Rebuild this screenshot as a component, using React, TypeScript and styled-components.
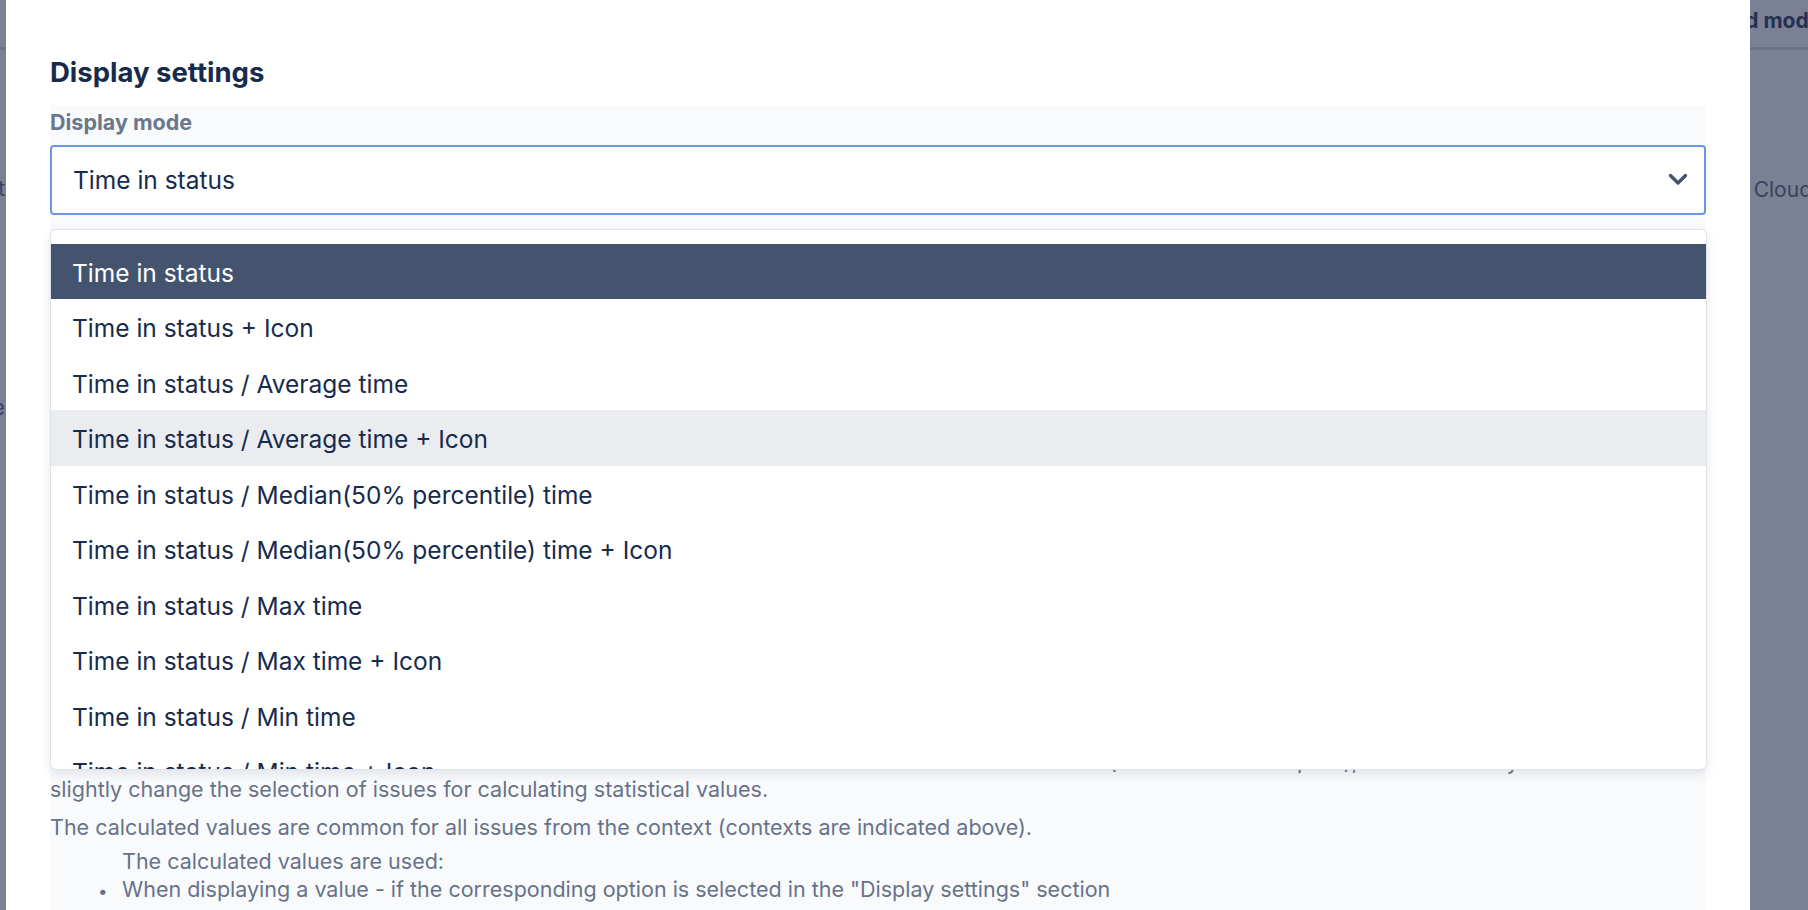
import styled, { createGlobalStyle } from 'styled-components'

const GlobalStyle = createGlobalStyle`
  html, body {
    margin: 0;
    padding: 0;
    height: 100%;
    overflow: hidden;
  }
  body {
    font-family: Inter, "Noto Sans", "Liberation Sans", sans-serif;
    background: #ffffff;
    color: #172b4d;
  }
  * {
    box-sizing: border-box;
  }
`

// page behind the modal
const BackPage = styled.div`
  height: 100vh;
  display: flex;
  flex-direction: column;
  background: #ffffff;
`

const BackHeader = styled.div`
  height: 50px;
  padding: 7px 0 0 1654px;
  border-bottom: 3px solid #dfe1e6;
  white-space: nowrap;
  overflow: hidden;
`

const BackTab = styled.span`
  font-size: 21px;
  line-height: 28px;
  font-weight: 700;
  color: #42526e;
`

const BackBody = styled.div`
  flex: 1;
  display: flex;
  justify-content: space-between;
  font-size: 21px;
  line-height: 28px;
  color: #6b778c;
  white-space: nowrap;
`

const LeftPeek = styled.div`
  width: 5px;
  overflow: hidden;
  direction: rtl;
  padding-top: 125px;
  display: flex;
  flex-direction: column;
  gap: 191px;
`

const RightPeek = styled.div`
  padding-top: 126px;
  margin-right: -4px;
`

const Overlay = styled.div`
  position: fixed;
  inset: 0;
  background: rgba(11, 22, 57, 0.54);
`

const Modal = styled.div`
  position: fixed;
  top: 0;
  bottom: 0;
  left: 6px;
  width: 1744px;
  background: #ffffff;
  padding: 56px 44px 0;
  overflow: hidden;
`

const Title = styled.h2`
  margin: 0;
  font-size: 27.5px;
  line-height: 33.6px;
  font-weight: 700;
  color: #172b4d;
`

const Panel = styled.div`
  margin-top: 15px;
  padding-top: 5px;
  background: #f9fafc;
  min-height: 900px;
`

const Label = styled.div`
  font-size: 21.5px;
  line-height: 25px;
  font-weight: 700;
  color: #6b778c;
  margin-bottom: 10px;
`

const SelectWrap = styled.div`
  position: relative;
`

const SelectBox = styled.div`
  height: 70px;
  border: 2px solid #6897e4;
  border-radius: 4px;
  background: #ffffff;
  display: flex;
  align-items: center;
  justify-content: space-between;
  padding: 0 16px 0 21px;
  font-size: 24.5px;
  color: #172b4d;
`

const Menu = styled.div`
  position: absolute;
  top: calc(100% + 14px);
  left: 0;
  right: -1px;
  height: 541px;
  padding-top: 14px;
  background: #ffffff;
  border: 1px solid rgba(9, 30, 66, 0.13);
  border-radius: 6px;
  box-shadow: 0 4px 11px rgba(9, 30, 66, 0.1);
  overflow: hidden;
  z-index: 2;
`

const Option = styled.div<{ $selected?: boolean; $hovered?: boolean }>`
  height: 55.5px;
  padding: 4px 21px 0;
  line-height: 51.5px;
  font-size: 24.5px;
  white-space: nowrap;
  color: ${p => (p.$selected ? '#ffffff' : '#172b4d')};
  background: ${p => (p.$selected ? '#44546f' : p.$hovered ? '#ebecf0' : 'transparent')};
`

const Description = styled.div`
  margin-top: 532px;
  font-size: 21.5px;
  line-height: 28px;
  color: #67728a;
`

const Para = styled.p<{ $gap?: number; $indent?: number }>`
  margin: ${p => p.$gap || 0}px 0 0;
  padding-left: ${p => p.$indent || 0}px;
  white-space: nowrap;
`

const List = styled.ul`
  margin: 0;
  padding-left: 72px;
  list-style: none;
`

const Item = styled.li`
  white-space: nowrap;
  &::before {
    content: '•';
    display: inline-block;
    width: 24px;
    margin-left: -24px;
    font-size: 17px;
    line-height: 1;
  }
`

const options = [
  'Time in status',
  'Time in status + Icon',
  'Time in status / Average time',
  'Time in status / Average time + Icon',
  'Time in status / Median(50% percentile) time',
  'Time in status / Median(50% percentile) time + Icon',
  'Time in status / Max time',
  'Time in status / Max time + Icon',
  'Time in status / Min time',
  'Time in status / Min time + Icon',
  'Time in status / Count',
  'Time in status / Count + Icon'
]

function Chevron () {
  return (
    <svg width='20' height='13' viewBox='0 0 20 13'>
      <polyline
        points='2.5,2.5 10,10 17.5,2.5'
        fill='none'
        stroke='#44546f'
        strokeWidth='3.4'
        strokeLinecap='round'
        strokeLinejoin='round'
      />
    </svg>
  )
}

export default function App () {
  const selected = 0
  const hovered = 3

  return (
    <>
      <GlobalStyle />
      <BackPage>
        <BackHeader>
          <BackTab>Advanced mode</BackTab>
        </BackHeader>
        <BackBody>
          <LeftPeek>
            <span>Format</span>
            <span>Type</span>
          </LeftPeek>
          <RightPeek>Jira Cloud</RightPeek>
        </BackBody>
      </BackPage>
      <Overlay />
      <Modal>
        <Title>Display settings</Title>
        <Panel>
          <Label>Display mode</Label>
          <SelectWrap>
            <SelectBox>
              <span>{options[selected]}</span>
              <Chevron />
            </SelectBox>
            <Menu>
              {options.map((o, i) => (
                <Option key={o} $selected={i === selected} $hovered={i === hovered}>
                  {o}
                </Option>
              ))}
            </Menu>
          </SelectWrap>
          <Description>
            <Para>
              The statistical values are calculated on the basis of the issues that meet the conditions from the context (the board or the sprint), and therefore you can
              <br />
              slightly change the selection of issues for calculating statistical values.
            </Para>
            <Para $gap={10}>
              The calculated values are common for all issues from the context (contexts are indicated above).
            </Para>
            <Para $gap={6} $indent={72}>The calculated values are used:</Para>
            <List>
              <Item>When displaying a value - if the corresponding option is selected in the "Display settings" section</Item>
            </List>
          </Description>
        </Panel>
      </Modal>
    </>
  )
}
